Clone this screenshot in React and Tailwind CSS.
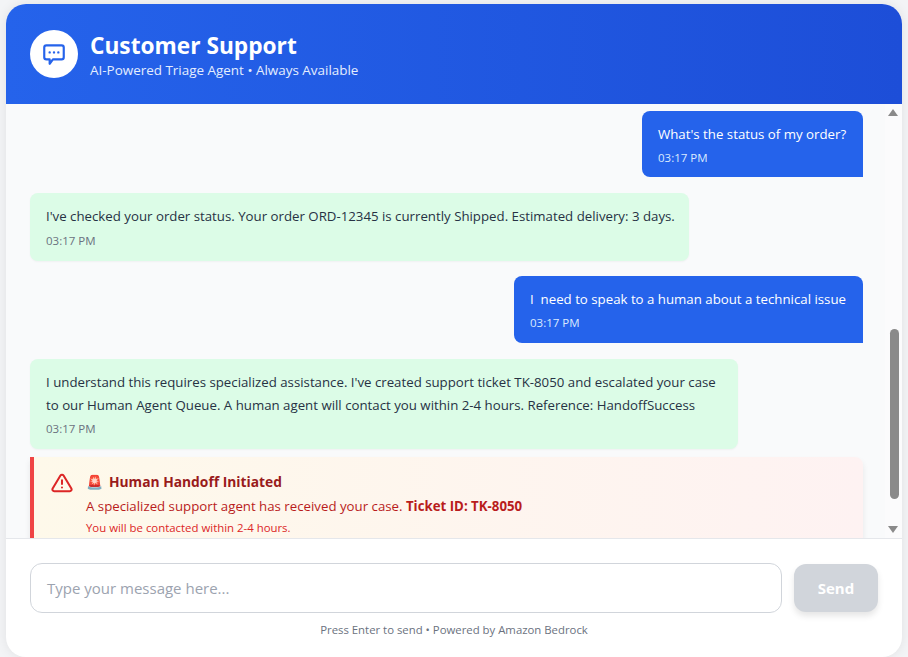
import React from "react";

function ChatIcon() {
  return (
    <svg width="26" height="26" viewBox="0 0 24 24" fill="none" stroke="#2563eb" strokeWidth="2" strokeLinecap="round" strokeLinejoin="round">
      <path d="M8 10.500h.01M12 10.500h.01M16 10.500h.01" strokeWidth="2.200" />
      <path d="M5 4h14a2 2 0 0 1 2 2v9a2 2 0 0 1-2 2h-8l-3 4v-4H5a2 2 0 0 1-2-2V6a2 2 0 0 1 2-2z" />
    </svg>
  );
}

function UserMsg({ children, w, pb }) {
  return (
    <div className="flex justify-end">
      <div className={`${w} ${pb} rounded-t-lg rounded-bl-lg bg-[#2563eb] text-white px-4 pt-3`}>
        <p className="text-[13.250px] leading-[22px] whitespace-pre">{children}</p>
        <p className="text-[11.500px] leading-[16px] mt-[5px] text-[#dbeafe]">03:17 PM</p>
      </div>
    </div>
  );
}

function AgentMsg({ lines, w, pb }) {
  return (
    <div className="flex justify-start">
      <div className={`${w} ${pb} rounded-lg bg-[#dcfce7] text-[#273244] px-4 pt-3 shadow-[0_1px_2px_rgba(0,0,0,0.04)]`}>
        {lines.map((l) => (
          <p key={l} className="text-[13.250px] leading-[22.500px] whitespace-pre">{l}</p>
        ))}
        <p className="text-[11.500px] leading-[16px] mt-[5px] text-[#6b7280]">03:17 PM</p>
      </div>
    </div>
  );
}

export default function App() {
  return (
    <div className="h-[657px] w-[908px] overflow-hidden bg-[#f3f4f6] pt-1 px-[6px] font-['Open_Sans','Noto_Sans',sans-serif]">
      <div className="h-[653px] flex flex-col rounded-[20px] bg-white overflow-hidden shadow-[0_0_12px_rgba(0,0,0,0.08)]">
        <header className="h-[100px] shrink-0 flex items-center gap-3 pl-6 bg-gradient-to-r from-[#2563eb] to-[#1d4ed8] text-white">
          <div className="w-12 h-12 rounded-full bg-white flex items-center justify-center">
            <ChatIcon />
          </div>
          <div className="pt-1">
            <h1 className="text-[22.700px] leading-[28px] font-bold">Customer Support</h1>
            <p className="text-[13.450px] leading-[20px] text-[#e4edfe]">AI-Powered Triage Agent • Always Available</p>
          </div>
        </header>

        <div className="relative h-[434px] shrink-0 bg-[#f9fafb] overflow-hidden">
          <div className="flex flex-col pt-[7px] pl-6 pr-[39px]">
            <UserMsg w="w-[221px]" pb="pb-[11px]">What's the status of my order?</UserMsg>
            <div className="h-4 shrink-0" />
            <AgentMsg w="w-[659px]" pb="pb-[12.500px]" lines={["I've checked your order status. Your order ORD-12345 is currently Shipped. Estimated delivery: 3 days."]} />
            <div className="h-[15px] shrink-0" />
            <UserMsg w="w-[349px]" pb="pb-3">I  need to speak to a human about a technical issue</UserMsg>
            <div className="h-4 shrink-0" />
            <AgentMsg w="w-[708px]" pb="pb-3" lines={["I understand this requires specialized assistance. I've created support ticket TK-8050 and escalated your case", "to our Human Agent Queue. A human agent will contact you within 2-4 hours. Reference: HandoffSuccess"]} />
            <div className="h-2 shrink-0" />
            <div className="flex gap-[13px] border-l-4 border-[#ef4444] rounded-r-lg bg-gradient-to-r from-[#fef9ea] to-[#fef2f2] pl-[17px] pt-[13px] pb-4 shadow-[0_4px_6px_rgba(0,0,0,0.08)]">
              <svg className="mt-[2px] shrink-0" width="22" height="22" viewBox="0 0 24 24" fill="none" stroke="#dc2626" strokeWidth="2.200" strokeLinecap="round" strokeLinejoin="round">
                <path d="M10.300 3.900 1.800 18a2 2 0 0 0 1.700 3h17a2 2 0 0 0 1.700-3L13.700 3.900a2 2 0 0 0-3.400 0z" />
                <path d="M12 9v4M12 17h.01" />
              </svg>
              <div>
                <p className="text-[13.800px] leading-[24px] font-bold text-[#991b1b]"><span className="mr-[6px] font-normal">🚨</span>Human Handoff Initiated</p>
                <p className="text-[13.250px] leading-[24px] text-[#b91c1c]">A specialized support agent has received your case. <span className="font-bold">Ticket ID: TK-8050</span></p>
                <p className="text-[11.400px] leading-[20px] text-[#dc2626]">You will be contacted within 2-4 hours.</p>
              </div>
            </div>
          </div>
          <div className="absolute right-0 top-0 h-full w-[17px] bg-[#fbfbfc]">
            <div className="absolute left-[3px] top-[5px] w-0 h-0 border-x-[5px] border-x-transparent border-b-[7px] border-b-[#8a8a8a]" />
            <div className="absolute left-[5px] top-[225px] w-[9px] h-[170px] rounded-full bg-[#8a8a8a]" />
            <div className="absolute left-[3px] bottom-[5px] w-0 h-0 border-x-[5px] border-x-transparent border-t-[7px] border-t-[#8a8a8a]" />
          </div>
        </div>

        <div className="flex-1 border-t border-[#e5e7eb] px-6 pt-[24px]">
          <div className="flex gap-3">
            <div className="flex-1 h-[50px] rounded-xl border border-[#d1d5db] bg-white flex items-center px-4 text-[15px] text-[#9ca3af]">Type your message here...</div>
            <button className="w-[84px] h-[48px] mt-px rounded-xl bg-[#d1d5db] text-white font-bold text-[15px] shadow-[0_4px_6px_rgba(0,0,0,0.1)]">Send</button>
          </div>
          <p className="mt-2 text-center text-[11.360px] leading-[18px] text-[#6b7280]">Press Enter to send • Powered by Amazon Bedrock</p>
        </div>
      </div>
    </div>
  );
}
